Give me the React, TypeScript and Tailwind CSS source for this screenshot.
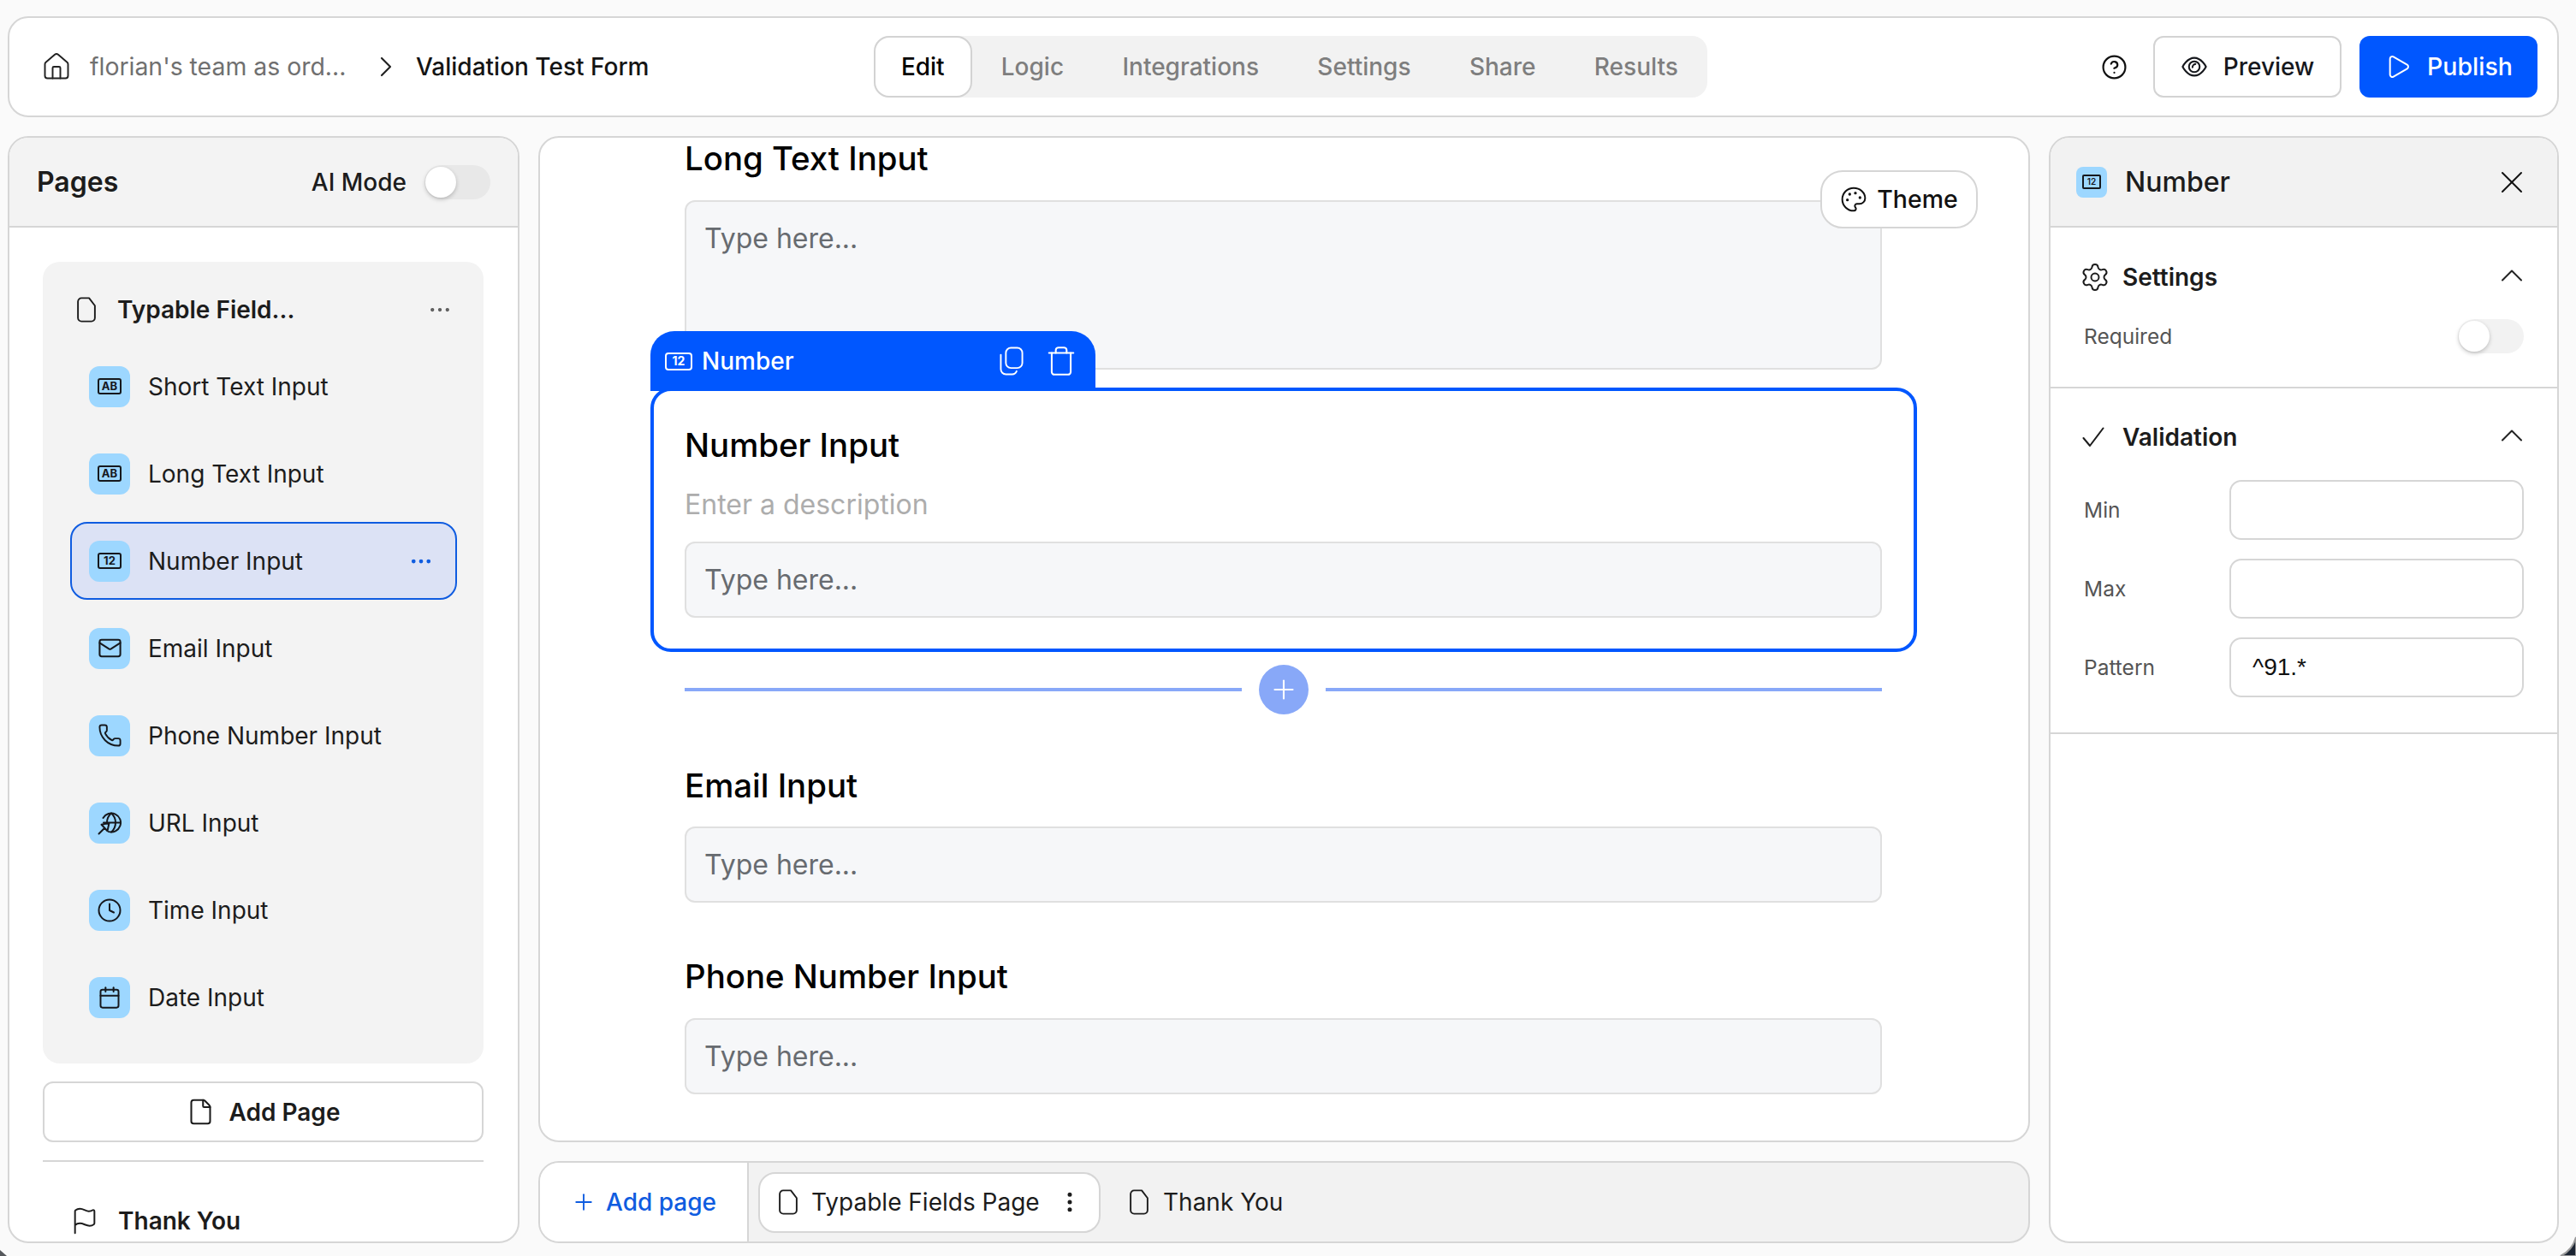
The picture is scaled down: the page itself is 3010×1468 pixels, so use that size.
import {
  Calendar,
  ChevronRight,
  ChevronUp,
  CircleHelp,
  Clock,
  Ellipsis,
  EllipsisVertical,
  File,
  Flag,
  House,
  Mail,
  Palette,
  Phone,
  Play,
  Plus,
  Settings,
  Trash,
  X,
} from "lucide-react";

function Badge({ label, invert }: { label: string; invert?: boolean }) {
  return (
    <span
      className={`flex items-center justify-center border-2 leading-none font-bold ${
        invert
          ? "h-[21px] w-[32px] rounded-[4px] border-white text-[14px] text-white"
          : "h-[19px] w-[28px] rounded-[3px] border-[#16181d] text-[13px] text-[#16181d]"
      }`}
    >
      {label}
    </span>
  );
}

function UrlIcon() {
  return (
    <svg width="28" height="28" viewBox="0 0 28 28" fill="none" stroke="#16181d" strokeWidth="2" strokeLinecap="round" strokeLinejoin="round">
      <path d="M6.500 8A11 11 0 1 1 13 24.100" />
      <path d="M7 13.500h20M16 2.500c-3.500 3-5 7-5 11M16 2.500c3.500 3 5 7 5 11s-1.500 8-5 11" />
      <path d="M1.500 26.500 8 20M13.500 14l-9 1.800 7 7.500z" />
    </svg>
  );
}

function CopyIcon() {
  return (
    <svg width="30" height="34" viewBox="3 0.500 19 23" fill="none" stroke="white" strokeWidth="1.300" strokeLinecap="round" strokeLinejoin="round">
      <rect x="8" y="1.500" width="13" height="16" rx="4" />
      <path d="M4 7v11.500a4 4 0 0 0 4 4h5a4 4 0 0 0 3.500-2.500" />
    </svg>
  );
}

function EyeIcon() {
  return (
    <svg width="32" height="26" viewBox="0 0 24 20" fill="none" stroke="#16181d" strokeWidth="1.600" strokeLinecap="round" strokeLinejoin="round">
      <path d="M1.500 10S5.500 2 12 2s10.500 8 10.500 8-4 8-10.500 8S1.500 10 1.500 10z" />
      <circle cx="12" cy="10" r="4.800" />
      <path d="M13 7.600a2.800 2.800 0 0 0-2.600 2.900" />
    </svg>
  );
}

function PageIcon() {
  return (
    <svg width="24" height="30" viewBox="3 1 17.500 22" fill="none" stroke="#1c1c1c" strokeWidth="1.400" strokeLinecap="round" strokeLinejoin="round">
      <path d="M7.500 2H14l5 6.500V19a3 3 0 0 1-3 3H7.500a3 3 0 0 1-3-3V5a3 3 0 0 1 3-3z" />
    </svg>
  );
}

function CheckMark() {
  return (
    <svg width="26" height="24" viewBox="0 0 26 24" fill="none" stroke="#1c1c1c" strokeWidth="2" strokeLinecap="round" strokeLinejoin="round">
      <path d="M1.500 13 9 22 24.500 1.500" />
    </svg>
  );
}

function Toggle({ track }: { track: string }) {
  return (
    <div className={`relative h-[40px] w-[77px] rounded-full ${track}`}>
      <div className="absolute top-[2px] left-[1px] h-[36px] w-[36px] rounded-full bg-white shadow-[0_2px_5px_rgba(0,0,0,0.22)]" />
    </div>
  );
}

const rows = [
  { name: "Short Text Input", icon: <Badge label="AB" /> },
  { name: "Long Text Input", icon: <Badge label="AB" /> },
  { name: "Number Input", icon: <Badge label="12" />, active: true },
  { name: "Email Input", icon: <Mail size={29} strokeWidth={1.7} color="#16181d" /> },
  { name: "Phone Number Input", icon: <Phone size={29} strokeWidth={1.6} color="#16181d" /> },
  { name: "URL Input", icon: <UrlIcon /> },
  { name: "Time Input", icon: <Clock size={30} strokeWidth={1.6} color="#16181d" /> },
  { name: "Date Input", icon: <Calendar size={28} strokeWidth={1.7} color="#16181d" /> },
];

const tabs = ["Logic", "Integrations", "Settings", "Share", "Results"];

function TopBar() {
  return (
    <header className="flex h-[118px] shrink-0 items-center rounded-[24px] border-2 border-[#d6d6d6] bg-white">
      <div className="flex w-[1010px] items-center pl-[37px]">
        <House size={36} strokeWidth={1.3} color="#222" />
        <span className="ml-[21px] w-[300px] text-[28.400px] text-[#707070]">florian's team as ord...</span>
        <ChevronRight size={40} strokeWidth={1.300} color="#222" className="ml-[26px]" />
        <span className="ml-[15px] text-[28px] font-medium text-[#141414]">Validation Test Form</span>
      </div>
      <nav className="flex h-[72px] w-[974px] items-center rounded-[18px] bg-[#f2f2f2]">
        <div className="flex h-full w-[116px] items-center justify-center rounded-[18px] border-2 border-[#d3d3d3] bg-white text-[28px] font-medium text-black">
          Edit
        </div>
        {tabs.map((t) => (
          <div key={t} className="px-[34.200px] text-[28px] font-medium text-[#7e7e7e]">
            {t}
          </div>
        ))}
      </nav>
      <div className="ml-auto flex items-center pr-[23px]">
        <CircleHelp size={31} strokeWidth={1.7} color="#111" />
        <button className="ml-[30px] flex h-[72px] w-[220px] items-center justify-center gap-[18px] rounded-[12px] border-2 border-[#d3d3d3] bg-white text-[28px] font-medium text-[#16181d]">
          <EyeIcon />
          Preview
        </button>
        <button className="ml-[21px] flex h-[72px] w-[208px] items-center justify-center gap-[18px] rounded-[12px] bg-[#0057ff] text-[28.500px] font-medium text-white">
          <Play size={32} strokeWidth={1.5} />
          Publish
        </button>
      </div>
    </header>
  );
}

function PagesPanel() {
  return (
    <aside className="flex w-[598px] shrink-0 flex-col overflow-hidden rounded-[24px] border-2 border-[#d6d6d6] bg-white">
      <div className="flex h-[105px] shrink-0 items-center border-b-2 border-[#d6d6d6] bg-[#f3f3f3] pr-[32px] pl-[32px]">
        <span className="text-[32px] font-semibold text-[#1c1c1c]">Pages</span>
        <span className="mr-[21px] ml-auto text-[28px] font-medium text-[#1c1c1c]">AI Mode</span>
        <Toggle track="bg-[#e8e8e8]" />
      </div>
      <div className="pt-[40px] pr-[40px] pl-[39px]">
        <div className="rounded-[20px] bg-[#f3f3f3] pt-[16px] pr-[23px] pb-[32px] pl-[32px]">
          <div className="mb-[4px] flex h-[80px] items-center pr-[13px] pl-[7px]">
            <PageIcon />
            <span className="ml-[24px] text-[28px] font-semibold text-[#1c1c1c]">Typable Field...</span>
            <Ellipsis size={30} strokeWidth={1.4} color="#555" className="ml-auto" />
          </div>
          <div className="flex w-[452px] flex-col gap-[11px]">
            {rows.map((r) => (
              <div
                key={r.name}
                className={`flex h-[91px] items-center rounded-[20px] border-2 pr-[25px] pl-[20px] ${
                  r.active ? "border-[#0f5ce0] bg-[#dce2f5]" : "border-transparent"
                }`}
              >
                <span className="flex h-[48px] w-[48px] shrink-0 items-center justify-center rounded-[12px] bg-[#9dd7ff]">{r.icon}</span>
                <span className="ml-[21px] text-[28px] text-[#1c1c1c]">{r.name}</span>
                {r.active && <Ellipsis size={30} strokeWidth={1.8} color="#0f5ce0" className="ml-auto" />}
              </div>
            ))}
          </div>
        </div>
        <button className="mt-[21px] flex h-[71px] w-full items-center justify-center gap-[17px] rounded-[12px] border-2 border-[#d6d6d6] bg-white text-[28px] font-semibold text-[#1c1c1c]">
          <File size={33} strokeWidth={1.5} />
          Add Page
        </button>
        <div className="mt-[21px] h-[2px] bg-[#d6d6d6]" />
        <div className="mt-[48px] flex items-center pl-[32px]">
          <Flag size={34} strokeWidth={1.4} color="#1c1c1c" />
          <span className="ml-[22px] text-[28px] font-semibold text-[#1c1c1c]">Thank You</span>
        </div>
      </div>
    </aside>
  );
}

function FieldBox({ tall }: { tall?: boolean }) {
  return (
    <div
      className={`w-[1399px] rounded-[12px] border-2 border-[#e0e0e0] bg-[#f6f7f9] px-[21px] text-[32px] text-[#676b70] ${
        tall ? "h-[198px] pt-[19px]" : "flex h-[89px] items-center"
      }`}
    >
      Type here...
    </div>
  );
}

function Canvas() {
  return (
    <section className="relative min-h-0 flex-1 overflow-hidden rounded-[24px] border-2 border-[#d6d6d6] bg-white">
      <div className="pl-[169px]">
        <h2 className="mt-[1px] text-[38.400px] leading-[46px] font-medium text-black">Long Text Input</h2>
        <div className="mt-[26px]">
          <FieldBox tall />
        </div>
      </div>
      <div className="relative mt-[21px] ml-[129px] w-[1480px] rounded-[24px] border-4 border-[#0057ff] bg-white px-[36px] pt-[40px] pb-[36px]">
        <div className="absolute -top-[70px] -left-[4px] flex h-[70px] w-[520px] items-center rounded-t-[28px] bg-[#0057ff] pr-[21px] pl-[17px] text-[28px] text-white">
          <Badge label="12" invert />
          <span className="ml-[11px] font-medium">Number</span>
          <span className="ml-auto flex items-center gap-[24px]">
            <CopyIcon />
            <Trash size={38} strokeWidth={1.300} />
          </span>
        </div>
        <h2 className="text-[38.400px] leading-[46px] font-medium text-black">Number Input</h2>
        <p className="mt-[27px] text-[32px] leading-[40px] text-[#adadad]">Enter a description</p>
        <div className="mt-[23px]">
          <FieldBox />
        </div>
      </div>
      <div className="mt-[15px] ml-[169px] flex h-[58px] w-[1399px] items-center">
        <div className="h-[4px] flex-1 bg-[#88a8f8]" />
        <div className="mx-[20px] flex h-[58px] w-[58px] items-center justify-center rounded-full bg-[#88a8f8] text-white">
          <Plus size={36} strokeWidth={1.400} />
        </div>
        <div className="h-[4px] flex-1 bg-[#88a8f8]" />
      </div>
      <div className="pl-[169px]">
        <h2 className="mt-[60px] text-[38.400px] leading-[46px] font-medium text-black">Email Input</h2>
        <div className="mt-[25px]">
          <FieldBox />
        </div>
        <h2 className="mt-[63px] text-[38.400px] leading-[46px] font-medium text-black">Phone Number Input</h2>
        <div className="mt-[26px]">
          <FieldBox />
        </div>
      </div>
      <button className="absolute top-[38px] right-[59px] flex h-[68px] w-[184px] items-center justify-center gap-[11px] rounded-[26px] border-2 border-[#d6d6d6] bg-white text-[28.500px] font-medium text-[#111]">
        <Palette size={32} strokeWidth={1.5} />
        Theme
      </button>
    </section>
  );
}

function BottomBar() {
  return (
    <div className="flex h-[96px] shrink-0 overflow-hidden rounded-[24px] border-2 border-[#d6d6d6] bg-[#f2f2f2]">
      <div className="flex w-[244px] shrink-0 items-center gap-[11px] border-r-2 border-[#d6d6d6] bg-white pl-[36px] text-[28px] font-medium text-[#0f5ce0]">
        <Plus size={30} strokeWidth={1.5} />
        Add page
      </div>
      <div className="flex items-center pl-[11px]">
        <div className="flex h-[71px] w-[400px] items-center rounded-[20px] border-2 border-[#d6d6d6] bg-white pl-[21px] text-[28px] text-[#1c1c1c]">
          <PageIcon />
          <span className="ml-[15px]">Typable Fields Page</span>
          <EllipsisVertical size={30} strokeWidth={2} className="ml-[20px]" />
        </div>
        <div className="ml-[33px] flex items-center text-[28px] text-[#1c1c1c]">
          <PageIcon />
          <span className="ml-[16px]">Thank You</span>
        </div>
      </div>
    </div>
  );
}

function PropsPanel() {
  return (
    <aside className="flex w-[596px] shrink-0 flex-col overflow-hidden rounded-[24px] border-2 border-[#d6d6d6] bg-white">
      <div className="flex h-[105px] shrink-0 items-center border-b-2 border-[#d6d6d6] bg-[#f2f2f2] pr-[31px] pl-[30px]">
        <span className="flex h-[36px] w-[36px] items-center justify-center rounded-[8px] bg-[#9dd7ff]">
          <span className="flex h-[17px] w-[22px] items-center justify-center rounded-[2px] border-2 border-[#16181d] text-[10px] font-semibold text-[#16181d]">12</span>
        </span>
        <span className="ml-[21px] text-[32px] font-medium text-[#1c1c1c]">Number</span>
        <X size={44} strokeWidth={1.100} color="#111" className="ml-auto" />
      </div>
      <div className="h-[188px] shrink-0 border-b-2 border-[#d6d6d6] pr-[39px] pl-[39px]">
        <div className="-mr-[8px] -ml-[5px] mt-[37px] flex h-[42px] items-center">
          <Settings size={36} strokeWidth={1.300} color="#1c1c1c" />
          <span className="ml-[14px] text-[28px] font-semibold text-[#1c1c1c]">Settings</span>
          <ChevronUp size={44} strokeWidth={1.100} color="#222" className="ml-auto -mt-[4px]" />
        </div>
        <div className="mt-[28px] flex items-center justify-between">
          <span className="text-[24.500px] text-[#555]">Required</span>
          <Toggle track="bg-[#f2f2f2]" />
        </div>
      </div>
      <div className="h-[404px] shrink-0 border-b-2 border-[#d6d6d6] pr-[39px] pl-[39px]">
        <div className="-mr-[8px] -ml-[2px] mt-[36px] flex h-[42px] items-center">
          <CheckMark />
          <span className="ml-[21px] text-[28px] font-semibold text-[#1c1c1c]">Validation</span>
          <ChevronUp size={44} strokeWidth={1.100} color="#222" className="ml-auto -mt-[4px]" />
        </div>
        <div className="mt-[29px] flex flex-col gap-[22px]">
          {[["Min", ""], ["Max", ""], ["Pattern", "^91.*"]].map(([l, v]) => (
            <div key={l} className="flex items-center">
              <span className="w-[170px] text-[24.500px] text-[#555]">{l}</span>
              <div className="flex h-[70px] w-[344px] items-center rounded-[14px] border-2 border-[#d6d6d6] bg-white pl-[25px] font-['Liberation_Sans',sans-serif] text-[28px] text-[#111]">
                {v}
              </div>
            </div>
          ))}
        </div>
      </div>
    </aside>
  );
}

export default function App() {
  return (
    <div className="relative flex h-[1468px] w-[3010px] flex-col gap-[22px] overflow-hidden bg-[#fafafa] pt-[19px] pr-[20px] pb-[15px] pl-[9px] font-['Inter',sans-serif]">
      <TopBar />
      <div className="flex min-h-0 flex-1 gap-[22px]">
        <PagesPanel />
        <div className="flex w-[1743px] shrink-0 flex-col gap-[22px]">
          <Canvas />
          <BottomBar />
        </div>
        <PropsPanel />
      </div>
      {/* window corners showing through at the bottom of the capture */}
      <svg className="absolute bottom-0 left-0" width="8" height="7" viewBox="0 0 8 7">
        <path d="M0 0 8 7H0z" fill="#55585c" />
      </svg>
      <svg className="absolute right-0 bottom-0" width="20" height="32" viewBox="0 0 20 32">
        <path d="M20 10Q16 25 2 32H20z" fill="#1c2533" stroke="#9a9a9a" strokeWidth="2" />
      </svg>
    </div>
  );
}
